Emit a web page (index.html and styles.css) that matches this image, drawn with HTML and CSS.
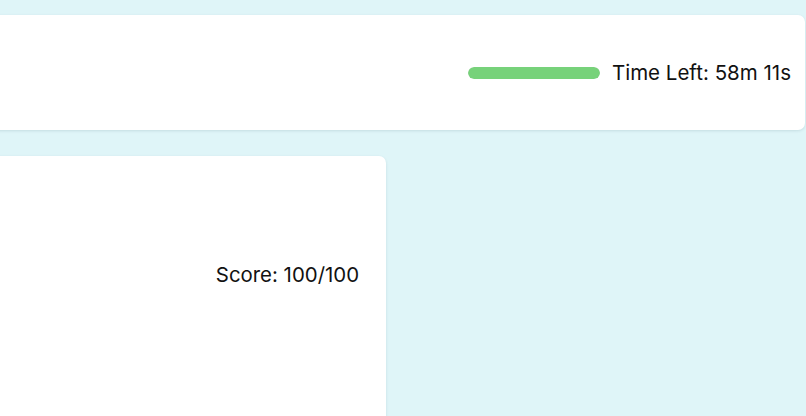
FILE: index.html
```html
<!DOCTYPE html>
<html>
<head>
<meta charset="utf-8">
<link rel="stylesheet" href="styles.css">
</head>
<body>
<div class="page">
  <header class="card topbar">
    <div class="progress"><div class="progress-fill" style="width:100%"></div></div>
    <span class="time">Time Left: 58m 11s</span>
  </header>
  <section class="card result">
    <span class="score">Score: 100/100</span>
  </section>
</div>
</body>
</html>
```
FILE: styles.css
```css
html, body {
  margin: 0;
  padding: 0;
  height: 100%;
  overflow: hidden;
}
body {
  background: #dff5f8;
  font-family: Inter, "Noto Sans", sans-serif;
  color: #111;
}
.page {
  display: flex;
  flex-direction: column;
  gap: 26px;
  padding-top: 15px;
  margin-left: -40px;
  width: 845px;
}
.card {
  background: #fff;
  border-radius: 7px;
  box-shadow: 0 1px 3px rgba(0, 60, 70, 0.12);
}
.topbar {
  height: 115px;
  display: flex;
  align-items: center;
  justify-content: flex-end;
  gap: 12px;
  padding-right: 14px;
  box-sizing: border-box;
}
.progress {
  width: 132px;
  height: 12px;
  border-radius: 6px;
  background: #e6e6e6;
  overflow: hidden;
}
.progress-fill {
  height: 100%;
  background: #77d27a;
  border-radius: 6px;
}
.time {
  font-size: 20.5px;
  line-height: 24px;
}
.result {
  width: 426px;
  height: 300px;
  display: flex;
  justify-content: flex-end;
  padding: 107px 27px 0 0;
  box-sizing: border-box;
  border-bottom-left-radius: 0;
  border-bottom-right-radius: 0;
}
.score {
  font-size: 20.4px;
  line-height: 24px;
}
```
